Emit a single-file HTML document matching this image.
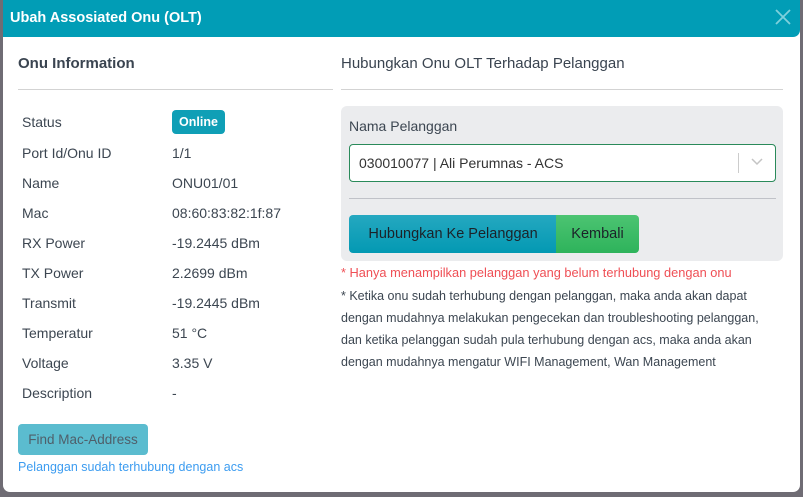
<!DOCTYPE html>
<html><head><style>
*{margin:0;padding:0;box-sizing:border-box}
body{width:803px;height:497px;background:#6f6c74;font-family:"Liberation Sans",sans-serif;position:relative;overflow:hidden;color:#3c4651}
.m{position:absolute;left:3px;top:0;width:797px;height:492px;background:#fff;border-radius:0 0 7px 7px}
.h{position:absolute;left:0;top:0;width:797px;height:37px;background:#019db6;border-radius:0 0 7px 0}
.a{position:absolute;white-space:nowrap}
.l{font-size:14px;color:#3c4651}
</style></head><body>
<div class="m">
<div class="h"></div>
<div class="a" style="left:7px;top:10px;color:#fff;font-weight:bold;font-size:14.5px">Ubah Assosiated Onu (OLT)</div>
<svg class="a" style="left:771px;top:8px" width="18" height="18"><path d="M2 2L16 16M16 2L2 16" stroke="#7fd0dc" stroke-width="1.8"/></svg>
</div>
<div class="a" style="left:18px;top:55px;font-weight:bold;font-size:15px;color:#3a4450">Onu Information</div>
<div class="a" style="left:18px;top:89px;width:315px;height:1px;background:#d3d3d3"></div>
<div class="a" style="left:341px;top:55px;font-size:15px;color:#3a4450">Hubungkan Onu OLT Terhadap Pelanggan</div>
<div class="a" style="left:341px;top:89px;width:442px;height:1px;background:#d3d3d3"></div>

<div class="a l" style="left:22px;top:114px">Status</div>
<div class="a" style="left:172px;top:110px;width:53px;height:24px;background:#0f9fb6;border-radius:4px;color:#fff;font-weight:bold;font-size:12.5px;text-align:center;line-height:24px">Online</div>
<div class="a l" style="left:22px;top:145px">Port Id/Onu ID</div><div class="a l" style="left:172px;top:145px">1/1</div>
<div class="a l" style="left:22px;top:175px">Name</div><div class="a l" style="left:172px;top:175px">ONU01/01</div>
<div class="a l" style="left:22px;top:205px">Mac</div><div class="a l" style="left:172px;top:205px">08:60:83:82:1f:87</div>
<div class="a l" style="left:22px;top:235px">RX Power</div><div class="a l" style="left:172px;top:235px">-19.2445 dBm</div>
<div class="a l" style="left:22px;top:265px">TX Power</div><div class="a l" style="left:172px;top:265px">2.2699 dBm</div>
<div class="a l" style="left:22px;top:295px">Transmit</div><div class="a l" style="left:172px;top:295px">-19.2445 dBm</div>
<div class="a l" style="left:22px;top:325px">Temperatur</div><div class="a l" style="left:172px;top:325px">51 °C</div>
<div class="a l" style="left:22px;top:355px">Voltage</div><div class="a l" style="left:172px;top:355px">3.35 V</div>
<div class="a l" style="left:22px;top:385px">Description</div><div class="a l" style="left:172px;top:385px">-</div>

<div class="a" style="left:18px;top:424px;width:130px;height:31px;background:#5bbccf;border-radius:4px;color:#4f5f6a;font-size:13.5px;text-align:center;line-height:31px">Find Mac-Address</div>
<div class="a" style="left:18px;top:460px;font-size:12.5px;color:#3c9cf0">Pelanggan sudah terhubung dengan acs</div>

<div class="a" style="left:341px;top:106px;width:442px;height:155px;background:#ebecee;border-radius:6px"></div>
<div class="a l" style="left:349px;top:118px">Nama Pelanggan</div>
<div class="a" style="left:349px;top:144px;width:427px;height:38px;background:#fff;border:1px solid #2a8a5a;border-radius:4px"></div>
<div class="a l" style="left:359px;top:155px;color:#333">030010077 | Ali Perumnas - ACS</div>
<div class="a" style="left:738px;top:153px;width:1px;height:20px;background:#ccc"></div>
<svg class="a" style="left:751px;top:158px" width="12" height="8"><path d="M1 1L6 6L11 1" stroke="#c4c4c4" stroke-width="1.5" fill="none"/></svg>
<div class="a" style="left:349px;top:198px;width:427px;height:1px;background:#c0c2c8"></div>
<div class="a" style="left:349px;top:215px;width:208px;height:38px;background:linear-gradient(#25a8c0,#0399b3);border-radius:4px 0 0 4px;color:#1c2229;font-size:14.5px;text-align:center;line-height:38px">Hubungkan Ke Pelanggan</div>
<div class="a" style="left:556px;top:215px;width:83px;height:38px;background:linear-gradient(#4cc472,#2eb35b);border-radius:0 4px 4px 0;color:#1c2229;font-size:14.5px;text-align:center;line-height:38px">Kembali</div>

<div class="a" style="left:341px;top:265px;font-size:12.8px;color:#ef4f55">* Hanya menampilkan pelanggan yang belum terhubung dengan onu</div>
<div class="a" style="left:341px;top:285px;font-size:12.5px;line-height:22px;color:#3c4651">* Ketika onu sudah terhubung dengan pelanggan, maka anda akan dapat<br>dengan mudahnya melakukan pengecekan dan troubleshooting pelanggan,<br>dan ketika pelanggan sudah pula terhubung dengan acs, maka anda akan<br>dengan mudahnya mengatur WIFI Management, Wan Management</div>
</body></html>
